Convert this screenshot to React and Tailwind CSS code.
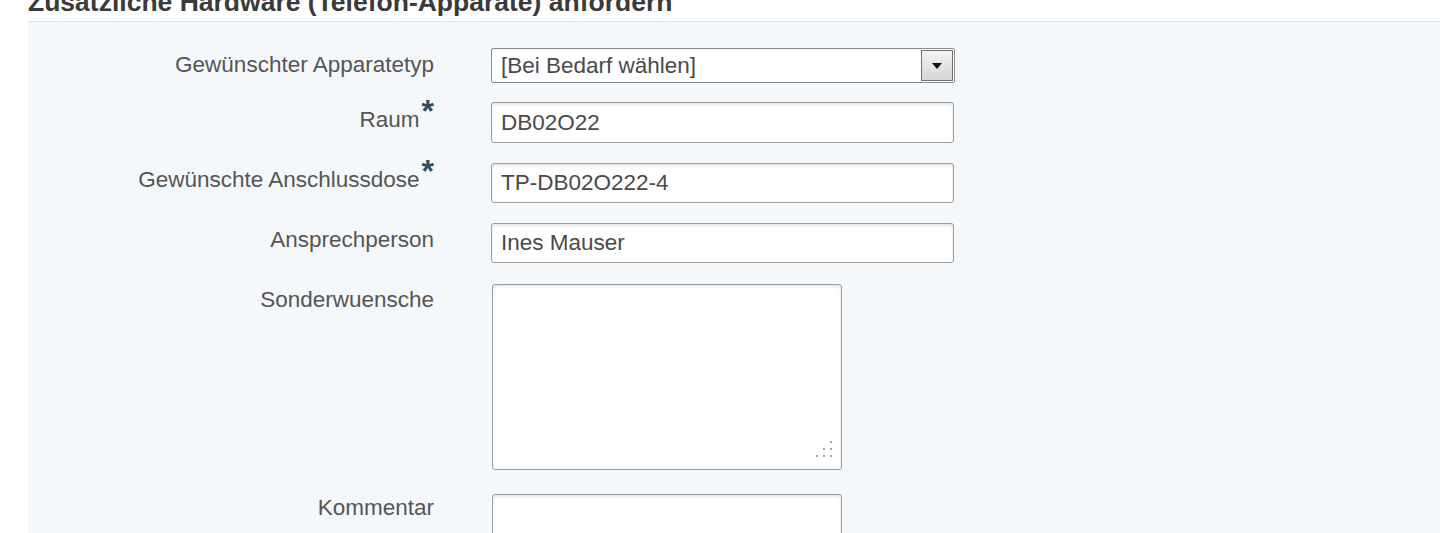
import React from "react";

const Label = ({ text, required, pt = "pt-[4px]" }) => (
  <div className={`w-[406px] shrink-0 text-right ${pt}`}>
    <span className="text-[22.5px] leading-[26px] text-[#555]">{text}</span>
    {required && (
      <span className="relative -top-[5px] ml-[2px] text-[32px] leading-[0px] font-bold text-[#2b4d5c]">
        *
      </span>
    )}
  </div>
);

const inputCls =
  "bg-white border border-[#9c9c9c] rounded-[3px] shadow-[inset_0_2px_3px_rgba(0,0,0,0.10)] text-[22.5px] text-[#4a4a4a] px-[9px] flex items-center";

const Row = ({ children, className = "" }) => (
  <div className={`flex items-start ${className}`}>{children}</div>
);

const Grip = () => (
  <svg className="absolute right-[8px] bottom-[11px]" width="18" height="18" viewBox="0 0 18 18">
    {[
      [15, 1],
      [8, 8],
      [15, 8],
      [1, 15],
      [8, 15],
      [15, 15],
    ].map(([x, y], i) => (
      <rect key={i} x={x} y={y} width="2" height="2" fill="#a3a3a3" />
    ))}
  </svg>
);

export default function App() {
  return (
    <div
      className="w-full h-[533px] overflow-hidden bg-white"
      style={{ fontFamily: '"Liberation Sans", Arial, sans-serif' }}
    >
      {/* Heading, cut at top of the screenshot */}
      <div className="ml-[28px] -mt-[13px] pb-[4px] border-b border-[#dde2e7]">
        <h2 className="text-[26.5px] leading-[30px] font-bold text-[#3a3a3a] whitespace-nowrap">
          Zusätzliche Hardware (Telefon-Apparate) anfordern
        </h2>
      </div>

      {/* Form panel */}
      <div className="ml-[28px] bg-[#f4f8fb] pt-[26px] h-[600px]">
        <Row>
          <Label text="Gewünschter Apparatetyp" />
          <div className="ml-[57px] w-[464px] h-[35px] bg-white border border-[#8a8a8a] rounded-[2px] flex items-center justify-between pl-[9px] pr-[1px]">
            <span className="text-[22.5px] text-[#4a4a4a]">[Bei Bedarf wählen]</span>
            <div className="w-[32px] h-[31px] border border-[#6e6e6e] bg-gradient-to-b from-[#f2f2f2] to-[#d6d6d6] flex items-center justify-center">
              <svg width="10" height="6" viewBox="0 0 10 6">
                <path d="M0 0 L10 0 L5 6 Z" fill="#111" />
              </svg>
            </div>
          </div>
        </Row>

        <Row className="mt-[19px]">
          <Label text="Raum" required pt="pt-[5px]" />
          <div className={`${inputCls} ml-[57px] w-[463px] h-[41px]`}>DB02O22</div>
        </Row>

        <Row className="mt-[20px]">
          <Label text="Gewünschte Anschlussdose" required />
          <div className={`${inputCls} ml-[57px] w-[463px] h-[40px]`}>TP-DB02O222-4</div>
        </Row>

        <Row className="mt-[20px]">
          <Label text="Ansprechperson" />
          <div className={`${inputCls} ml-[57px] w-[463px] h-[40px]`}>Ines Mauser</div>
        </Row>

        <Row className="mt-[21px]">
          <Label text="Sonderwuensche" pt="pt-[3px]" />
          <div className={`${inputCls} relative ml-[58px] w-[350px] h-[186px]`}>
            <Grip />
          </div>
        </Row>

        <Row className="mt-[24px]">
          <Label text="Kommentar" pt="pt-[1px]" />
          <div className={`${inputCls} ml-[58px] w-[350px] h-[70px]`} />
        </Row>
      </div>
    </div>
  );
}
